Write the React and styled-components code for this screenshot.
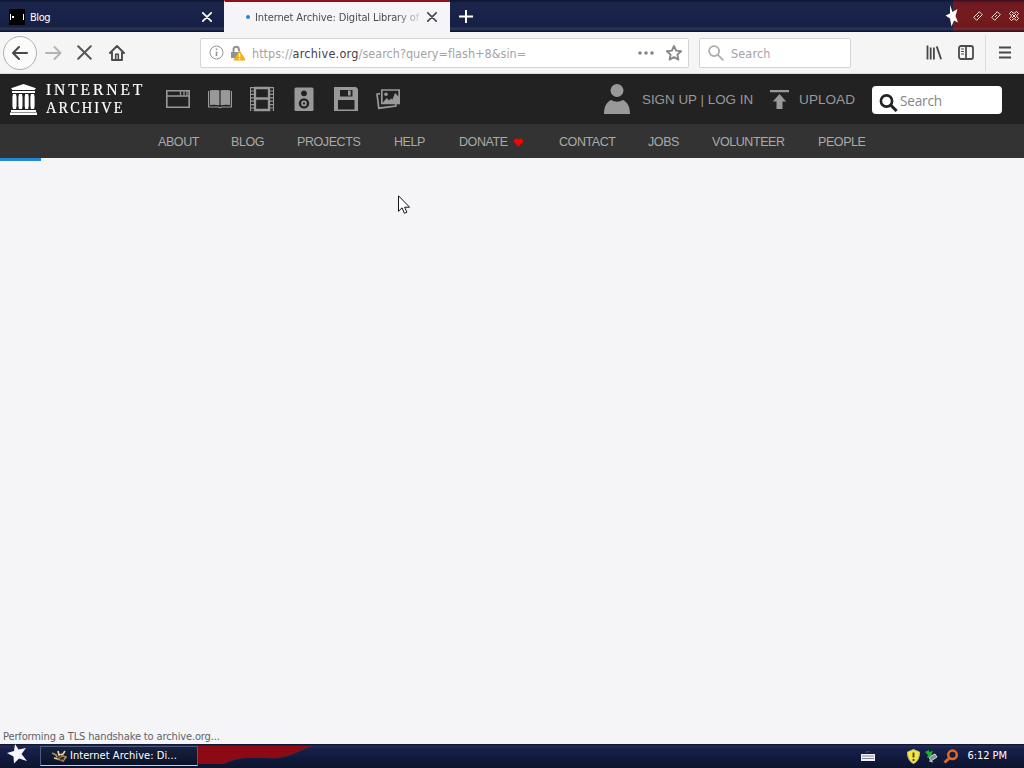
import React from "react";
import styled, { createGlobalStyle } from "styled-components";

const GlobalStyle = createGlobalStyle`
  * { box-sizing: border-box; }
  body {
    margin: 0;
    overflow: hidden;
    font-family: "DejaVu Sans Condensed", "DejaVu Sans", sans-serif;
    font-size: 11px;
  }
  svg { display: block; flex: none; }
`;

const Desktop = styled.div`
  position: relative;
  display: flex;
  flex-direction: column;
  width: 1024px;
  height: 768px;
  background: #f5f5f7;
`;

const Label = styled.span`
  font-family: ${(p) => p.$font || "inherit"};
  font-size: ${(p) => p.$size || 11}px;
  letter-spacing: ${(p) => p.$track || 0}px;
  color: ${(p) => p.$color || "inherit"};
  white-space: nowrap;
  line-height: 16px;
`;

/* browser tabs */

const TabBar = styled.div`
  display: flex;
  height: 32px;
  background: linear-gradient(#0c1332 0, #1c2549 3px, #19224a 14px, #162043 27px, #2c355c 28px, #252d50 30px, #10152f 31px);
`;

const Tab = styled.div`
  display: flex;
  align-items: center;
  width: ${(p) => p.$width}px;
  height: 32px;
  padding: 2px 0 0 ${(p) => p.$left}px;
  color: #fff;
  ${(p) => p.$active && `
    color: #4c4c4f;
    background: #f5f5f7;
    border-top: 2px solid #8f1019;
    border-left: 1px solid #f5f5f7;
    padding-top: 0;
  `}
`;

const Favicon = styled.div`
  display: flex;
  align-items: center;
  width: 16px;
  height: 16px;
  margin-right: 5px;
  background: #000;
`;

const TabTitle = styled.div`
  width: ${(p) => p.$width}px;
  padding-top: 1px;
  overflow: hidden;
  white-space: nowrap;
  ${(p) => p.$fade && "mask-image: linear-gradient(to right, #000 140px, transparent 170px);"}
`;

const LoadingDot = styled.div`
  width: 4px;
  height: 4px;
  margin-right: 5px;
  border-radius: 50%;
  background: #2484dc;
`;

const NewTab = styled.div`
  padding: 10px 9px;
`;

const WindowControls = styled.div`
  display: flex;
  align-items: center;
  gap: 8px;
  width: 71px;
  height: 32px;
  margin-left: auto;
  padding-left: 19px;
  background: linear-gradient(#3c0d20 0, #701a20 3px, #751b1e 20px, #6c191d 27px, #7d3037 29px, #3a1020 31px);
`;

const TitleStar = styled.div`
  display: flex;
  width: 14px;
  margin-left: -27px;
  margin-right: 6px;
`;

/* browser toolbar */

const Toolbar = styled.div`
  display: flex;
  align-items: center;
  height: 42px;
  padding: 0 0 0 3px;
  background: #f5f5f6;
  border-bottom: 1px solid #dadbdd;
`;

const BackButton = styled.div`
  display: flex;
  align-items: center;
  justify-content: center;
  width: 34px;
  height: 34px;
  border: 1px solid #b1b1b3;
  border-radius: 50%;
  background: #fbfbfb;
`;

const ToolIcon = styled.div`
  margin-left: ${(p) => p.$gap}px;
  padding-top: ${(p) => p.$drop || 0}px;
`;

const UrlText = styled(ToolIcon)`
  width: 386px;
`;

const Field = styled.div`
  display: flex;
  align-items: center;
  width: ${(p) => p.$width}px;
  height: 30px;
  margin-left: ${(p) => p.$gap}px;
  padding-left: 8px;
  border: 1px solid #d4d4d6;
  border-radius: 2px;
  background: #fff;
  color: #a3a3a6;
  b { font-weight: normal; color: #424245; letter-spacing: 0.25px; }
`;

const Separator = styled.div`
  width: 1px;
  height: 36px;
  margin: 0 12px 0 11px;
  background: #dcdcde;
`;

/* archive header */

const Header = styled.header`
  display: flex;
  align-items: center;
  height: 50px;
  padding-left: 10px;
  background: #222;
  color: #999;
`;

const Wordmark = styled.div`
  display: flex;
  flex-direction: column;
  gap: 2px;
  width: 120px;
  margin-left: 9px;
  color: #fff;
  font-family: "Liberation Serif", serif;
  -webkit-text-stroke: 0.2px #fff;
`;

const WordLine = styled.span`
  font-size: 17px;
  line-height: 16px;
  letter-spacing: ${(p) => p.$track}px;
  white-space: nowrap;
  transform: scaleX(${(p) => p.$scale});
  transform-origin: left;
`;

const MediaIcons = styled.div`
  display: flex;
  gap: 18px;
`;

const Account = styled.div`
  display: flex;
  align-items: center;
  height: 30px;
  margin-left: auto;
  padding-right: 22px;
`;

const SearchBox = styled.div`
  display: flex;
  align-items: center;
  width: 130px;
  height: 28px;
  margin: 2px 0 0 17px;
  padding-left: 7px;
  border-radius: 4px;
  background: #fff;
`;

const Nav = styled.nav`
  display: flex;
  gap: 33px;
  height: 34px;
  padding: 10px 0 0 158px;
  background: #333;
`;

const NavItem = styled.div`
  display: flex;
  align-items: center;
  width: ${(p) => p.$width}px;
  height: 16px;
  color: #aaa;
  font: 12.5px/16px "Liberation Sans", Arial, sans-serif;
  letter-spacing: -0.42px;
  white-space: nowrap;
`;

const Page = styled.main`
  display: flex;
  flex: 1;
  flex-direction: column;
  justify-content: space-between;
`;

const Progress = styled.div`
  width: 41px;
  height: 3px;
  background: #2389d7;
`;

const Status = styled.div`
  width: 222px;
  height: 15px;
  padding-left: 3px;
  color: #626267;
`;

const Pointer = styled.div`
  position: absolute;
  left: 398px;
  top: 195px;
`;

/* taskbar */

const Taskbar = styled.footer`
  display: flex;
  align-items: center;
  height: 24px;
  background: linear-gradient(#0a0f28 0, #232c52 2px, #17204a 5px, #111a3d 14px, #0d142e 24px);
  color: #fff;
`;

const Start = styled.div`
  width: 40px;
  padding-left: 7px;
  margin-top: -5px;
`;

const TaskButton = styled.div`
  display: flex;
  align-items: center;
  width: 158px;
  height: 20px;
  padding-left: 11px;
  border: 1px solid #4d5b83;
  border-bottom-color: #c8cede;
  background: linear-gradient(#18213e, #0a1229);
`;

const Tray = styled.div`
  display: flex;
  align-items: center;
  margin-left: auto;
  padding-right: 17px;
`;

const ARIAL = '"Liberation Sans", Arial, sans-serif';

const links = [
  ["ABOUT", 40],
  ["BLOG", 33],
  ["PROJECTS", 64],
  ["HELP", 32],
  ["DONATE", 67],
  ["CONTACT", 56],
  ["JOBS", 31],
  ["VOLUNTEER", 73],
  ["PEOPLE", 48],
];

function Close({ color, size = 10 }) {
  return (
    <svg width={size} height={size} viewBox="0 0 10 10" stroke={color} strokeWidth={size > 12 ? 1.3 : 1.7} fill="none" strokeLinecap="round">
      <path d="M.8.8l8.4 8.4M9.2.8L.8 9.2" />
    </svg>
  );
}

function Arrow({ color, flip }) {
  return (
    <svg width="18" height="16" viewBox="0 0 18 16" fill="none" stroke={color} strokeWidth="2" strokeLinecap="round" strokeLinejoin="round">
      <path d={flip ? "M1 8h14M9.5 2l6 6-6 6" : "M16 8H2.5M8 2L2 8l6 6"} />
    </svg>
  );
}

function Ticket() {
  return (
    <svg width="10" height="10" viewBox="0 0 10 10" fill="none" stroke="#f3dfd8">
      <path d="M.7 6.3L6.3.7l3 3-5.6 5.6z" />
      <path d="M4 6l2-2" />
    </svg>
  );
}

function BrowserTabs() {
  return (
    <TabBar>
      <Tab $width={224} $left={9}>
        <Favicon>
          <svg width="16" height="16" fill="#fff"><path d="M1 5h1v6H1zM3 7h2v2H3zM14 5h1v6h-1z" /></svg>
        </Favicon>
        <TabTitle $width={172}><Label $track={-0.45}>Blog</Label></TabTitle>
        <Close color="#fff" />
      </Tab>
      <Tab $active $width={226} $left={21}>
        <LoadingDot />
        <TabTitle $width={172} $fade><Label $track={-0.12}>Internet Archive: Digital Library of</Label></TabTitle>
        <Close color="#4b4b4e" />
      </Tab>
      <NewTab>
        <svg width="14" height="13" stroke="#fff" strokeWidth="2"><path d="M7 0v13M0 6.5h14" /></svg>
      </NewTab>
      <WindowControls>
        <TitleStar>
          <svg width="14" height="24" viewBox="0 0 14 24" fill="#fff">
            <path d="M5 1l2.5 7L12.500 5l-2 7 2.500 6.500-4-2-2.500 6-1.500-8-4.500-3L5 9.500z" />
          </svg>
        </TitleStar>
        <Ticket />
        <Ticket />
        <svg width="10" height="10" viewBox="0 0 10 10" fill="none" stroke="#f3dfd8">
          <path d="M2.5.5l2.5 2 2.5-2 2 2-2 2.5 2 2.5-2 2-2.500-2-2.500 2-2-2 2-2.500-2-2.500zM3 3l4 4M7 3L3 7" />
        </svg>
      </WindowControls>
    </TabBar>
  );
}

function BrowserToolbar() {
  return (
    <Toolbar>
      <BackButton><Arrow color="#48484b" /></BackButton>
      <ToolIcon $gap={8}><Arrow flip color="#b5b5b7" /></ToolIcon>
      <ToolIcon $gap={14}><Close color="#555558" size={15} /></ToolIcon>
      <ToolIcon $gap={17}>
        <svg width="16" height="16" viewBox="0 0 16 16" fill="none" stroke="#4c4c4f" strokeWidth="1.9" strokeLinecap="round" strokeLinejoin="round">
          <path d="M1 8l7-7 7 7M3 7v8h10V7" />
          <path d="M6.7 15V9.2h2.6V15" strokeWidth="1.6" />
        </svg>
      </ToolIcon>
      <Field $width={489} $gap={75}>
        <svg width="15" height="15" viewBox="0 0 15 15" fill="none" stroke="#949497">
          <circle cx="7.5" cy="7.5" r="6.5" /><path d="M7.5 6.5V11M7.5 3.6v1.5" strokeWidth="1.6" />
        </svg>
        <ToolIcon $gap={6} $drop={1}>
          <svg width="16" height="16" viewBox="0 0 16 16">
            <path d="M3.5 7V4.5a2.7 2.7 0 015.4 0V6" fill="none" stroke="#929295" strokeWidth="2" />
            <path d="M1 7h8v6H1z" fill="#929295" />
            <path d="M9.5 6L15 15H4z" fill="#f5b70b" stroke="#e7a412" strokeLinejoin="round" />
            <path d="M9.5 8.5v3.4M9.5 13v1.4" stroke="#fff" strokeWidth="1.4" />
          </svg>
        </ToolIcon>
        <UrlText $gap={6} $drop={2}>
          <Label $size={12.5} $track={0.03}>https://<b>archive.org</b>/search?query=flash+8&amp;sin=</Label>
        </UrlText>
        <svg width="16" height="4" fill="#858588"><circle cx="2" cy="2" r="1.8" /><circle cx="8" cy="2" r="1.8" /><circle cx="14" cy="2" r="1.8" /></svg>
        <ToolIcon $gap={12}>
          <svg width="16" height="16" viewBox="0 0 16 16" fill="none" stroke="#88888b" strokeWidth="1.9" strokeLinejoin="round">
            <path d="M8 1l2.1 4.6 5 .6-3.7 3.4 1 5L8 12.1l-4.4 2.5 1-5L.9 6.2l5-.6z" />
          </svg>
        </ToolIcon>
      </Field>
      <Field $width={152} $gap={10}>
        <svg width="16" height="16" viewBox="0 0 17 17" fill="none" stroke="#adadb0" strokeWidth="2" strokeLinecap="round">
          <circle cx="6.5" cy="6.5" r="5.3" /><path d="M10.5 10.5l5.3 5.3" />
        </svg>
        <ToolIcon $gap={7} $drop={2}><Label $size={12.5} $track={0.15}>Search</Label></ToolIcon>
      </Field>
      <ToolIcon $gap={75}>
        <svg width="16" height="15" viewBox="0 0 16 15" stroke="#48484b" strokeWidth="1.8" fill="none">
          <path d="M1.5 .5v14M4.7 2.5v12M7.9 2.5v12M10.7 1.4l4.4 12.8" />
        </svg>
      </ToolIcon>
      <ToolIcon $gap={16}>
        <svg width="16" height="15" viewBox="0 0 16 15" fill="none" stroke="#4c4c4f" strokeWidth="1.8">
          <rect x="1" y="1" width="14" height="13" rx="2" /><path d="M8 1v13" /><path d="M3 4h3M3 6.5h3M3 9h3" strokeWidth="1" />
        </svg>
      </ToolIcon>
      <Separator />
      <svg width="14" height="13" stroke="#48484b" strokeWidth="1.8"><path d="M1 1.5h12M1 6.5h12M1 11.5h12" /></svg>
    </Toolbar>
  );
}

function ArchiveHeader() {
  return (
    <>
      <Header>
        <svg width="27" height="31" viewBox="0 0 27 31" fill="#fff">
          <path d="M13.5 0L26 4.3 24.5 6h-22L1 4.3zM2 7h23v2H2zM1 26h25v2H1zM0 28.5h27V31H0z" />
          <path d="M3 10h3l.6 3v9l-.6 3H3l-.6-3v-9zM9 10h3l.5 3v9l-.5 3H9l-.6-3v-9zM15.2 10h3l.5 3v9l-.5 3h-3l-.5-3v-9zM21 10h3l.6 3v9l-.6 3h-3l-.6-3v-9z" />
        </svg>
        <Wordmark>
          <WordLine $track={3.1} $scale={0.92}>INTERNET</WordLine>
          <WordLine $track={2.4} $scale={0.85}>ARCHIVE</WordLine>
        </Wordmark>
        <MediaIcons>
          <svg width="24" height="26" viewBox="0 0 24 26" fill="none" stroke="#999" strokeWidth="1.6">
            <path d="M.8 4.8h22.4v16.4H.8zM.8 10h22.4" /><path d="M14.5 5v4.5M18 5v4.5M21 5v4.5" strokeWidth="1.3" />
          </svg>
          <svg width="24" height="26" viewBox="0 0 24 26" fill="#999">
            <path d="M2 4.3q5-.6 9.4 0v15Q7 18.6 2 19zM12.6 4.3Q17 3.7 22 4.3V19q-5-.4-9.4.3z" />
            <path d="M.6 5v16h9.4q2 1.3 4 0h9.4V5" fill="none" stroke="#999" strokeWidth="1.2" />
          </svg>
          <svg width="24" height="26" viewBox="0 0 24 26" fill="none" stroke="#999">
            <path d="M5 2h14v22H5zM5 12.5h14" strokeWidth="2.3" />
            <path d="M.5 1v24M23.5 1v24" /><path d="M2.2 1v24M21.8 1v24" strokeWidth="3.6" strokeDasharray="1.2 2.2" />
          </svg>
          <svg width="24" height="26" viewBox="0 0 24 26" fill="#999">
            <rect x="2.5" y="1.5" width="19" height="23.5" rx="1.5" />
            <circle cx="12" cy="7.3" r="2.9" fill="#222" /><circle cx="12" cy="17.4" r="5.2" fill="#222" />
            <circle cx="12" cy="17.4" r="2" fill="#222" stroke="#999" strokeWidth="1.7" />
          </svg>
          <svg width="24" height="26" viewBox="0 0 24 26" fill="#999">
            <path d="M0 1h22l2 2v22H0zM6 4v6.5h12.5V4zM4 14v9.5h16.5V14z" fillRule="evenodd" />
            <path d="M14 4.5h2.7v5H14z" />
          </svg>
          <svg width="24" height="26" viewBox="0 0 24 26" fill="none" stroke="#999" strokeWidth="1.7">
            <path d="M5.8 4h17.4v13.5H5.8z" /><path d="M4 7.6l-3 .6 1.8 14 17-2.2v-2" />
            <circle cx="10" cy="8.2" r="1.8" fill="#999" stroke="none" />
            <path d="M6.5 17l4.2-5 2.3 2.500 2-2 1.500 1L19 7l4 4v6z" fill="#999" stroke="none" />
          </svg>
        </MediaIcons>
        <Account>
          <svg width="26" height="30" viewBox="0 0 26 30" fill="#999">
            <circle cx="13" cy="6.5" r="6.5" /><path d="M0 30c0-8 3-12 7-14q6 3.5 12 0c4 2 7 6 7 14z" />
          </svg>
          <ToolIcon $gap={12} $drop={2}><Label $font={ARIAL} $size={13.4}>SIGN UP | LOG IN</Label></ToolIcon>
          <ToolIcon $gap={17} $drop={1}>
            <svg width="19" height="19" viewBox="0 0 19 19" fill="#999"><path d="M0 0h19v2.3H0zM9.5 4l6.7 7.4h-3.7V19h-6v-7.6H2.8z" /></svg>
          </ToolIcon>
          <ToolIcon $gap={10} $drop={2}><Label $font={ARIAL} $size={13.6}>UPLOAD</Label></ToolIcon>
          <SearchBox>
            <ToolIcon $gap={0} $drop={4}>
              <svg width="19" height="19" viewBox="0 0 19 19" fill="none" stroke="#222" strokeWidth="2.6">
                <circle cx="7.5" cy="8" r="5.6" /><path d="M11.6 12l6 6" strokeWidth="3" />
              </svg>
            </ToolIcon>
            <ToolIcon $gap={2} $drop={1}>
              <Label $font={'"Open Sans", sans-serif'} $size={13.6} $track={-0.2} $color="#858585">Search</Label>
            </ToolIcon>
          </SearchBox>
        </Account>
      </Header>
      <Nav>
        {links.map(([name, width]) => (
          <NavItem key={name} $width={width}>
            {name}
            {name === "DONATE" && (
              <ToolIcon $gap={5} $drop={0}>
                <svg width="11" height="9" viewBox="0 0 12 10" fill="#f00"><path d="M6 9.5L1.5 5C-.5 2 3.5-1.2 6 1.8 8.5-1.2 12.5 2 10.5 5z" /></svg>
              </ToolIcon>
            )}
          </NavItem>
        ))}
      </Nav>
    </>
  );
}

function SystemBar() {
  return (
    <Taskbar>
      <Start>
        <svg width="21" height="20" viewBox="0 0 21 20" fill="#f7f7fc"><path d="M8 0l3.500 5.500L19 4l-4.500 6 5.500 7-8-2.500L7 19.500 6.500 12.500 0 9l7-2z" /></svg>
      </Start>
      <TaskButton>
        <svg width="15" height="13" viewBox="0 0 15 13" fill="none" strokeWidth="1.8">
          <path d="M0 3l4 2 2 4 5 2 3-4-4-1-3 2" stroke="#a58b5c" />
          <path d="M6 1l1 4 4-1 2-3M2 8l4 1" stroke="#e1d2a7" /><path d="M5 8l4-2M8 10l4-1" stroke="#6a4220" />
        </svg>
        <ToolIcon $gap={3}><Label $track={0.05}>Internet Archive: Di...</Label></ToolIcon>
      </TaskButton>
      <svg width="130" height="24" viewBox="0 0 130 24">
        <path d="M0 2h114C102 5 94 13 76 14 56 13 40 12 25 20H0z" fill="#8d0913" />
        <path d="M114 2C102 5 94 13 76 14 56 13 40 12 25 20" fill="none" stroke="#54243a" />
      </svg>
      <Tray>
        <svg width="14" height="10" viewBox="0 0 14 10">
          <path d="M0 3h14v7H0z" fill="#f1f1f4" /><path d="M1.500 5h12M1.500 7.500h12" stroke="#15193b" strokeDasharray="1 1" />
          <path d="M6 2V0h3" stroke="#555b76" fill="none" />
        </svg>
        <ToolIcon $gap={32}>
          <svg width="13" height="15" viewBox="0 0 13 15"><path d="M6.5.5L12.5 3c0 6-2 9.5-6 11.5C2.5 12.5.5 9 .5 3z" fill="#f4e63d" stroke="#b8b8a0" /><path d="M6.5 3.5v5M6.5 10v2" stroke="#473b12" strokeWidth="1.8" /></svg>
        </ToolIcon>
        <ToolIcon $gap={5}>
          <svg width="13" height="14" viewBox="0 0 13 14"><path d="M4 8l6-3 2 3-6 4z" fill="#888e91" stroke="#d4d6d7" /><path d="M0 3l4-2v2l4-1-2 5-4 2 1-3z" fill="#20af32" /><path d="M4 12l4 1" stroke="#c5c8ca" /></svg>
        </ToolIcon>
        <ToolIcon $gap={5}>
          <svg width="16" height="15" viewBox="0 0 16 15" fill="none" stroke="#e8671b"><circle cx="9.5" cy="5.8" r="4.3" strokeWidth="2.5" /><path d="M6 9.5L1.5 13.5" strokeWidth="3" /></svg>
        </ToolIcon>
        <ToolIcon $gap={8}><Label $track={-0.05}>6:12 PM</Label></ToolIcon>
      </Tray>
    </Taskbar>
  );
}

function App() {
  return (
    <Desktop>
      <GlobalStyle />
      <BrowserTabs />
      <BrowserToolbar />
      <ArchiveHeader />
      <Page>
        <Progress />
        <Status><Label $track={-0.13}>Performing a TLS handshake to archive.org...</Label></Status>
      </Page>
      <SystemBar />
      <Pointer>
        <svg width="13" height="20" viewBox="0 0 13 20" fill="#fff" stroke="#151515">
          <path d="M.5.8v15.5l3.6-3.5 2.3 5.5 2.5-1.1-2.3-5h5z" />
        </svg>
      </Pointer>
    </Desktop>
  );
}

export default App;
